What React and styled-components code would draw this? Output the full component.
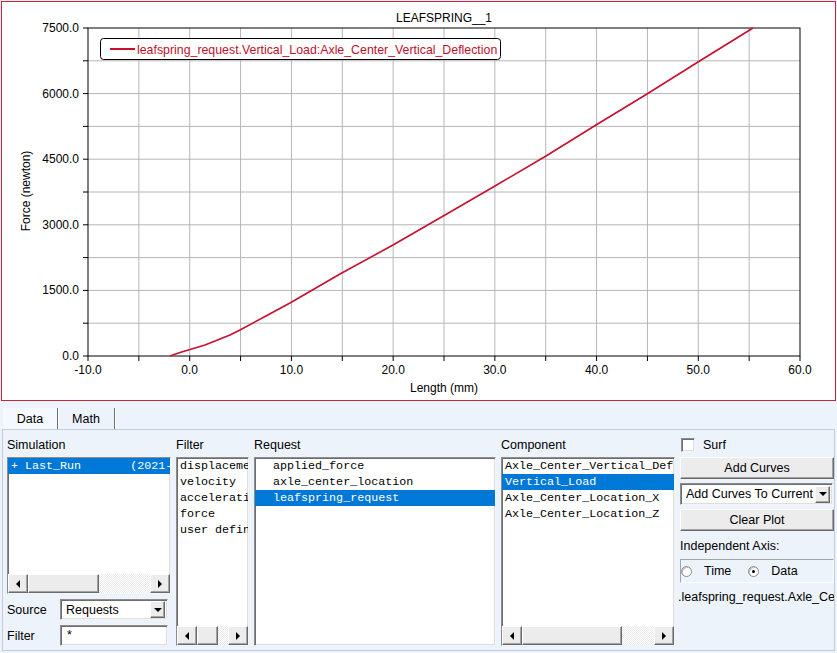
import React from "react";
import styled, { createGlobalStyle } from "styled-components";

const GlobalStyle = createGlobalStyle`
  html, body { margin: 0; padding: 0; background: #fff; }
  body {
    font-family: "Liberation Sans", Arial, sans-serif;
    font-size: 12.5px;
    color: #000;
  }
`;

// plot geometry in page pixels
const X0 = 88, X1 = 800, Y0 = 356, Y1 = 28;
const xGrid = Array.from({ length: 15 }, (_, i) => X0 + ((X1 - X0) * i) / 14);
const yGrid = Array.from({ length: 11 }, (_, i) => Y0 - ((Y0 - Y1) * i) / 10);

const curve = [
  [170, 356], [180, 352.5], [190, 349.5], [205, 345], [220, 339], [230, 335],
  [240, 330], [265, 316.5], [290, 303], [340, 274], [393, 245], [445, 215],
  [495, 186], [546, 156], [596, 125], [647, 94], [698, 62], [753, 28],
];

const Window = styled.div`
  width: 837px;
  height: 653px;
  display: flex;
  flex-direction: column;
  overflow: hidden;
  background: #edf3fb;
`;

const ChartFrame = styled.div`
  margin: 1px 1px 0 1px;
  height: 398px;
  border: 1px solid #c8243c;
  background: #fff;
  svg { display: block; }
`;

const Panel = styled.div`
  flex: 1;
  display: flex;
  flex-direction: column;
  background: #edf3fb;
  min-height: 0;
`;

const TabStrip = styled.div`
  display: flex;
  align-items: flex-end;
  height: 28px;
  padding-left: 3px;
`;

const Tab = styled.div`
  box-sizing: border-box;
  width: ${(p) => p.$w}px;
  height: 21px;
  display: flex;
  align-items: center;
  justify-content: center;
  border-right: 1px solid #6f6f6f;
  box-shadow: 1px 0 0 #ffffff;
  background: ${(p) => (p.$active ? "#f5f8fc" : "transparent")};
`;

const Content = styled.div`
  flex: 1;
  margin: 0 2px 2px;
  border: 1px solid #c3ccd8;
  display: flex;
  gap: 5px;
  padding: 7px 0 4px 4px;
  min-height: 0;
`;

const Column = styled.div`
  width: ${(p) => p.$w}px;
  flex: none;
  display: flex;
  flex-direction: column;
`;

const Label = styled.div`
  height: 16px;
  line-height: 16px;
  margin-bottom: 4px;
  white-space: nowrap;
`;

const ListBox = styled.div`
  box-sizing: border-box;
  ${(p) => (p.$h ? `height: ${p.$h}px; flex: none;` : "flex: 1;")}
  display: flex;
  flex-direction: column;
  background: #fff;
  border: 1px solid;
  border-color: #8c8c8c #f4f4f4 #f4f4f4 #8c8c8c;
  box-shadow: inset 1px 1px 0 #6e6e6e, inset -1px -1px 0 #dedede;
  overflow: hidden;
`;

const Items = styled.div`
  flex: 1;
  overflow: hidden;
`;

const Item = styled.div`
  height: 16px;
  line-height: 16px;
  padding-left: ${(p) => p.$indent ?? 3}px;
  font-family: "Liberation Mono", "Courier New", monospace;
  font-size: 11.7px;
  white-space: pre;
  overflow: hidden;
  background: ${(p) => (p.$selected ? "#0078d7" : "transparent")};
  color: ${(p) => (p.$selected ? "#fff" : "#000")};
`;

const ScrollBar = styled.div`
  height: 19px;
  display: flex;
  flex: none;
`;

const raised = `
  box-sizing: border-box;
  background: #ececec;
  border: 1px solid;
  border-color: #ffffff #6a6a6a #6a6a6a #ffffff;
  box-shadow: inset -1px -1px 0 #a3a3a3;
`;

const ArrowButton = styled.div`
  ${raised}
  width: 20px;
  flex: none;
  display: flex;
  align-items: center;
  justify-content: center;
  &::after {
    content: "";
    border-top: 4px solid transparent;
    border-bottom: 4px solid transparent;
    ${(p) => (p.$dir === "left" ? "border-right: 4px solid #000;" : "border-left: 4px solid #000;")}
  }
`;

const Thumb = styled.div`
  ${raised}
  width: ${(p) => p.$w}px;
  flex: none;
`;

const Track = styled.div`
  flex: 1;
  background: repeating-conic-gradient(#ffffff 0 25%, #ebebeb 0 50%) 0 0 / 2px 2px;
`;

const FieldRow = styled.div`
  display: flex;
  align-items: center;
  height: 21px;
  margin-top: 5px;
`;

const FieldLabel = styled.div`
  width: 53px;
  flex: none;
`;

const sunken = `
  box-sizing: border-box;
  background: #fff;
  border: 1px solid;
  border-color: #8c8c8c #f4f4f4 #f4f4f4 #8c8c8c;
  box-shadow: inset 1px 1px 0 #6e6e6e, inset -1px -1px 0 #dedede;
`;

const Select = styled.div`
  ${sunken}
  width: ${(p) => p.$w}px;
  height: ${(p) => p.$h || 21}px;
  margin-bottom: ${(p) => p.$mb || 0}px;
  display: flex;
  align-items: center;
  padding: 0 2px 0 5px;
  white-space: nowrap;
  span { flex: 1; overflow: hidden; }
`;

const DropButton = styled.div`
  ${raised}
  width: 15px;
  height: 17px;
  flex: none;
  display: flex;
  align-items: center;
  justify-content: center;
  &::after {
    content: "";
    border-left: 4px solid transparent;
    border-right: 4px solid transparent;
    border-top: 4px solid #000;
  }
`;

const TextInput = styled.div`
  ${sunken}
  width: 108px;
  height: 21px;
  line-height: 19px;
  padding-left: 6px;
`;

const CheckRow = styled.label`
  display: flex;
  align-items: center;
  gap: 8px;
  height: 16px;
  margin-bottom: 4px;
  padding-left: 1px;
`;

const CheckBox = styled.span`
  ${sunken}
  width: 14px;
  height: 14px;
  display: inline-block;
`;

const Button = styled.div`
  ${raised}
  height: 22px;
  display: flex;
  align-items: center;
  justify-content: center;
  margin-bottom: 4px;
`;

const AxisLabel = styled.div`
  height: 16px;
  line-height: 16px;
  margin-top: 3px;
`;

const RadioGroup = styled.div`
  box-sizing: border-box;
  height: 24px;
  margin-top: 5px;
  display: flex;
  align-items: center;
  border: 1px solid;
  border-color: #a4a4a4 #ffffff #ffffff #a4a4a4;
  padding-left: 0;
`;

const RadioOption = styled.div`
  display: flex;
  align-items: center;
  gap: 12px;
  margin-right: 17px;
`;

const Radio = styled.span`
  box-sizing: border-box;
  width: 11px;
  height: 11px;
  border-radius: 50%;
  border: 1px solid #8a8a8a;
  background: #fff;
  box-shadow: inset 1px 1px 0 #c0c0c0;
  display: flex;
  align-items: center;
  justify-content: center;
  &::after {
    content: "";
    width: 3px;
    height: 3px;
    border-radius: 50%;
    background: ${(p) => (p.$on ? "#000" : "transparent")};
  }
`;

const PathText = styled.div`
  margin-top: 6px;
  height: 16px;
  line-height: 16px;
  white-space: nowrap;
  overflow: hidden;
  margin-left: -2px;
`;

function Scroll({ thumb }) {
  return (
    <ScrollBar>
      <ArrowButton $dir="left" />
      <Thumb $w={thumb} />
      <Track />
      <ArrowButton $dir="right" />
    </ScrollBar>
  );
}

function Chart() {
  const font = { fontFamily: '"Liberation Sans", Arial, sans-serif', fontSize: 12 };
  return (
    <svg width="833" height="398" viewBox="2 2 833 398" style={font}>
      {xGrid.slice(1, -1).map((x) => (
        <line key={"gx" + x} x1={x} x2={x} y1={Y1} y2={Y0} stroke="#b6b6b6" />
      ))}
      {yGrid.slice(1, -1).map((y) => (
        <line key={"gy" + y} x1={X0} x2={X1} y1={y} y2={y} stroke="#b6b6b6" />
      ))}
      <rect x={X0} y={Y1} width={X1 - X0} height={Y0 - Y1} fill="none" stroke="#000" />
      {xGrid.map((x) => (
        <line key={"tx" + x} x1={x} x2={x} y1={Y0} y2={Y0 + 5} stroke="#000" />
      ))}
      {yGrid.map((y) => (
        <line key={"ty" + y} x1={X0 - 5} x2={X0} y1={y} y2={y} stroke="#000" />
      ))}
      {xGrid.map((x, i) =>
        i % 2 === 0 ? (
          <text key={"lx" + i} x={x} y={374} textAnchor="middle">
            {(-10 + 5 * i).toFixed(1)}
          </text>
        ) : null
      )}
      {yGrid.map((y, i) =>
        i % 2 === 0 ? (
          <text key={"ly" + i} x={79} y={y + 4} textAnchor="end">
            {(750 * i).toFixed(1)}
          </text>
        ) : null
      )}
      <polyline
        points={curve.map((p) => p.join(",")).join(" ")}
        fill="none"
        stroke="#c8102e"
        strokeWidth="1.6"
        strokeLinejoin="round"
      />
      <text x={444} y={22} textAnchor="middle">LEAFSPRING__1</text>
      <rect x={100.5} y={38.5} width={400} height={21} rx={3} fill="#fff" stroke="#000" />
      <line x1={110} x2={135} y1={49} y2={49} stroke="#c8102e" strokeWidth="2" />
      <text x={137} y={54} fill="#c0102a" style={{ fontSize: 12.35 }}>
        leafspring_request.Vertical_Load:Axle_Center_Vertical_Deflection
      </text>
      <text x={444} y={392} textAnchor="middle">Length (mm)</text>
      <text transform="translate(30 191) rotate(-90)" textAnchor="middle">
        Force (newton)
      </text>
    </svg>
  );
}

export default function App() {
  return (
    <>
      <GlobalStyle />
      <Window>
        <ChartFrame>
          <Chart />
        </ChartFrame>
        <Panel>
          <TabStrip>
            <Tab $w={55} $active>Data</Tab>
            <Tab $w={57}>Math</Tab>
          </TabStrip>
          <Content>
            <Column $w={164}>
              <Label>Simulation</Label>
              <ListBox $h={137}>
                <Items>
                  <Item $selected>{"+ Last_Run       (2021-05-14 10:22:31)"}</Item>
                </Items>
                <Scroll thumb={71} />
              </ListBox>
              <FieldRow>
                <FieldLabel>Source</FieldLabel>
                <Select $w={108}>
                  <span>Requests</span>
                  <DropButton />
                </Select>
              </FieldRow>
              <FieldRow>
                <FieldLabel>Filter</FieldLabel>
                <TextInput>*</TextInput>
              </FieldRow>
            </Column>

            <Column $w={73}>
              <Label>Filter</Label>
              <ListBox>
                <Items>
                  <Item>displacement</Item>
                  <Item>velocity</Item>
                  <Item>acceleration</Item>
                  <Item>force</Item>
                  <Item>user defined</Item>
                </Items>
                <Scroll thumb={21} />
              </ListBox>
            </Column>

            <Column $w={242}>
              <Label>Request</Label>
              <ListBox>
                <Items>
                  <Item $indent={18}>applied_force</Item>
                  <Item $indent={18}>axle_center_location</Item>
                  <Item $indent={18} $selected>leafspring_request</Item>
                </Items>
              </ListBox>
            </Column>

            <Column $w={174}>
              <Label>Component</Label>
              <ListBox>
                <Items>
                  <Item>Axle_Center_Vertical_Deflection</Item>
                  <Item $selected>Vertical_Load</Item>
                  <Item>Axle_Center_Location_X</Item>
                  <Item>Axle_Center_Location_Z</Item>
                </Items>
                <Scroll thumb={100} />
              </ListBox>
            </Column>

            <Column $w={154}>
              <CheckRow>
                <CheckBox />
                Surf
              </CheckRow>
              <Button>Add Curves</Button>
              <Select $w={153} $h={22} $mb={4}>
                <span>Add Curves To Current</span>
                <DropButton />
              </Select>
              <Button>Clear Plot</Button>
              <AxisLabel>Independent Axis:</AxisLabel>
              <RadioGroup>
                <RadioOption>
                  <Radio />
                  Time
                </RadioOption>
                <RadioOption>
                  <Radio $on />
                  Data
                </RadioOption>
              </RadioGroup>
              <PathText>.leafspring_request.Axle_Center_Vertical_Deflection</PathText>
            </Column>
          </Content>
        </Panel>
      </Window>
    </>
  );
}
